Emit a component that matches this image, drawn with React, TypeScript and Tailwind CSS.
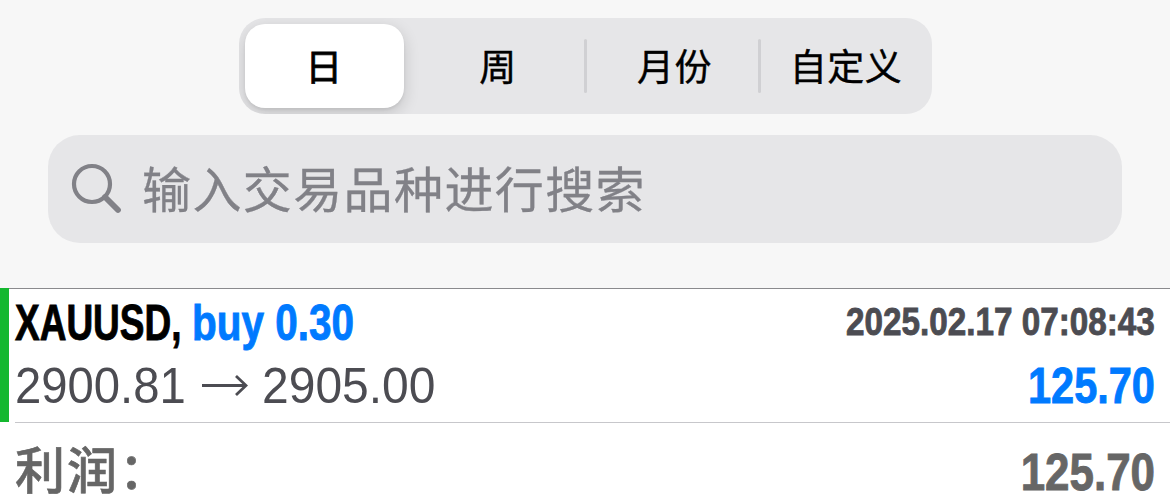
import type { ReactNode } from 'react';

const tabs = [
  { label: '日', width: 'w-[159px]', inset: '', active: true, divider: false },
  { label: '周', width: 'w-[180px]', inset: 'pl-[9px]', active: false, divider: false },
  { label: '月份', width: 'w-[174px]', inset: 'pl-[5px]', active: false, divider: true },
  { label: '自定义', width: 'w-[174px]', inset: '', active: false, divider: true },
];

export default function App() {
  return (
    <div className="flex h-[501px] w-[1170px] flex-col overflow-hidden bg-white font-['Liberation_Sans','Noto_Sans_CJK_SC',sans-serif]">
      <header className="flex h-[289px] shrink-0 flex-col items-center border-b border-[#8a8a8d] bg-[#f7f7f7] pt-[18px]">
        <PeriodTabs />
        <SearchField />
      </header>

      <main className="flex flex-col">
        <Deal />
        <div className="flex h-[78px] items-start justify-between pr-[15px] pl-[15px] text-[#666666]">
          <span className="pt-[11px] text-[50px] leading-[76px] font-medium tracking-[2px] [-webkit-text-stroke:0.6px_currentColor]">
            利润：
          </span>
          <Condensed className="mt-[23px] origin-right scale-x-[0.845] text-[52px]">125.70</Condensed>
        </div>
      </main>
    </div>
  );
}

function PeriodTabs() {
  return (
    <div className="flex h-24 w-[693px] shrink-0 overflow-hidden rounded-[26px] bg-[#e6e6e8] py-1.5 pl-1.5">
      {tabs.map((tab) => (
        <div key={tab.label} className={`flex items-center ${tab.width}`}>
          {tab.divider && <div className="h-[54px] w-[3px] shrink-0 rounded-full bg-[#d0d0d3]" />}
          <button
            className={`h-full flex-1 pt-1 text-[37px] leading-none tracking-[0.5px] text-black ${tab.inset} ${
              tab.active
                ? 'rounded-[20px] bg-white shadow-[0_5px_16px_rgba(0,0,0,0.16),0_2px_3px_rgba(0,0,0,0.06)] [-webkit-text-stroke:0.8px_currentColor]'
                : '[-webkit-text-stroke:0.4px_currentColor]'
            }`}
          >
            {tab.label}
          </button>
        </div>
      ))}
    </div>
  );
}

function SearchField() {
  return (
    <div className="mt-[21px] flex h-[108px] w-[1074px] shrink-0 items-center rounded-[32px] bg-[#e6e6e8] pl-[23px] text-[#818187]">
      <svg className="h-[52px] w-[52px] shrink-0" viewBox="0 0 52 52" fill="none" stroke="currentColor" strokeLinecap="round">
        <circle cx="21" cy="21" r="18" strokeWidth="4.2" />
        <path d="M34 34L47 47" strokeWidth="5.8" />
      </svg>
      <span className="pt-[5px] pl-[19px] text-[49px] leading-none tracking-[1.4px] [-webkit-text-stroke:0.3px_currentColor]">
        输入交易品种进行搜索
      </span>
    </div>
  );
}

function Deal() {
  return (
    <section className="flex h-[134px]">
      <div className="-mt-px mb-px w-[9px] shrink-0 bg-[#14b82f]" />
      <div className="ml-1.5 flex flex-1 flex-col border-b border-[#c7c7cb] pr-[15px]">
        <div className="flex h-[67px] items-center justify-between">
          <div className="flex">
            <div className="w-[177px]">
              <Condensed className="origin-left scale-x-[0.74] text-[50px] text-black">XAUUSD,</Condensed>
            </div>
            <Condensed className="origin-left scale-x-[0.81] text-[50px] text-[#007aff]">buy 0.30</Condensed>
          </div>
          <Condensed className="origin-right scale-x-[0.842] pb-0.5 text-[39.5px] text-[#4c4c52]">2025.02.17 07:08:43</Condensed>
        </div>
        <div className="flex h-[66px] items-center justify-between pb-1.5">
          <div className="flex items-center text-[50px] leading-none text-[#4c4c52]">
            <span className="w-[186px] origin-left scale-x-[0.945]">2900.81</span>
            <svg className="h-6 w-[47px] shrink-0" viewBox="0 0 47 24" fill="none" stroke="currentColor">
              <path d="M1 11.5H45" strokeWidth="3" />
              <path d="M35 2L45 11.5L35 21" strokeWidth="2.8" />
            </svg>
            <span className="ml-[14px] origin-left scale-x-[0.96]">2905.00</span>
          </div>
          <Condensed className="origin-right scale-x-[0.83] text-[50px] text-[#007aff]">125.70</Condensed>
        </div>
      </div>
    </section>
  );
}

// Bold type squeezed horizontally, used for symbols and amounts.
// The thin stroke gives back the stem weight lost to the squeeze.
function Condensed({ className, children }: { className: string; children: ReactNode }) {
  return (
    <span className={`inline-block leading-none font-bold whitespace-nowrap [-webkit-text-stroke:0.9px_currentColor] ${className}`}>
      {children}
    </span>
  );
}
